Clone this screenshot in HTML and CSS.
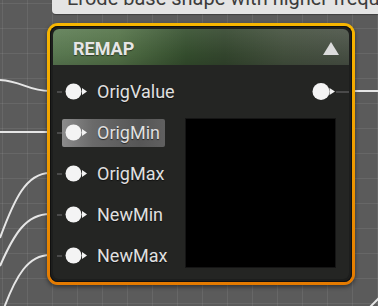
FILE: index.html
```html
<!DOCTYPE html>
<html lang="en">
<head>
    <meta charset="UTF-8">
    <meta name="viewport" content="width=device-width, initial-scale=1.0">
    <title>Remap Node</title>
    <link rel="stylesheet" href="styles.css">
</head>
<body>
    <div class="graph">
        <!-- wires live on the canvas, behind the node -->
        <svg class="wires" width="378" height="306" viewBox="0 0 378 306">
            <path d="M0,80 C22,81 28,91 50,91" />
            <path d="M0,132 L50,132" />
            <path d="M0,238 C14,200 26,173 50,173" />
            <path d="M0,266 C14,234 26,214 50,214" />
            <path d="M4,308 C16,276 28,255 50,255" />
            <path d="M352,91 L378,91" />
            <path d="M370,307 L379,298" />
        </svg>

        <div class="tooltip">Erode base shape with higher frequency noise</div>

        <div class="node">
            <div class="node-inner">
                <header class="node-header">
                    <span class="node-title">REMAP</span>
                    <span class="collapse-arrow"></span>
                </header>
                <div class="node-body">
                    <div class="inputs">
                        <div class="pin-row"><span class="pin-group"><svg class="pin" width="23" height="17" viewBox="0 0 23 17"><circle cx="8.5" cy="8.5" r="8"/><polygon points="17,5 22,8.5 17,12"/></svg><span class="pin-label">OrigValue</span></span></div>
                        <div class="pin-row"><span class="pin-group hovered"><svg class="pin" width="23" height="17" viewBox="0 0 23 17"><circle cx="8.5" cy="8.5" r="8"/><polygon points="17,5 22,8.5 17,12"/></svg><span class="pin-label">OrigMin</span></span></div>
                        <div class="pin-row"><span class="pin-group"><svg class="pin" width="23" height="17" viewBox="0 0 23 17"><circle cx="8.5" cy="8.5" r="8"/><polygon points="17,5 22,8.5 17,12"/></svg><span class="pin-label">OrigMax</span></span></div>
                        <div class="pin-row"><span class="pin-group"><svg class="pin" width="23" height="17" viewBox="0 0 23 17"><circle cx="8.5" cy="8.5" r="8"/><polygon points="17,5 22,8.5 17,12"/></svg><span class="pin-label">NewMin</span></span></div>
                        <div class="pin-row"><span class="pin-group"><svg class="pin" width="23" height="17" viewBox="0 0 23 17"><circle cx="8.5" cy="8.5" r="8"/><polygon points="17,5 22,8.5 17,12"/></svg><span class="pin-label">NewMax</span></span></div>
                    </div>
                    <div class="outputs">
                        <div class="out-row"><svg class="pin" width="24" height="17" viewBox="0 0 24 17"><circle cx="9" cy="8.5" r="8.5"/><polygon points="17.5,5 23,8.5 17.5,12"/></svg><span class="stub"></span></div>
                        <div class="preview"></div>
                    </div>
                </div>
            </div>
        </div>
    </div>
</body>
</html>
```

FILE: styles.css
```css
body {
    margin: 0;
    font-family: Roboto, "Liberation Sans", Arial, sans-serif;
    background-color: #5b5b5b;
}
.graph {
    position: relative;
    width: 378px;
    height: 306px;
    overflow: hidden;
    background-color: #5b5b5b;
    background-image:
        linear-gradient(to right, rgba(255, 255, 255, 0.07) 1px, transparent 1px),
        linear-gradient(to bottom, rgba(255, 255, 255, 0.07) 1px, transparent 1px);
    background-size: 25px 25px;
    background-position: 2px 3px;
}
.wires {
    position: absolute;
    left: 0;
    top: 0;
}
.wires path {
    fill: none;
    stroke: #e6e6e6;
    stroke-width: 2;
}

/* tooltip hanging above the node, mostly cut off */
.tooltip {
    position: absolute;
    left: 52px;
    top: -20px;
    width: 340px;
    height: 34px;
    box-sizing: border-box;
    padding: 8px 0 0 15px;
    background-color: #e4e4e4;
    border-radius: 4px;
    box-shadow: 0 1px 1px rgba(0, 0, 0, 0.3);
    font-size: 20px;
    line-height: 20px;
    color: #3c3c3c;
    white-space: nowrap;
    overflow: hidden;
}
.tooltip::after {
    content: "";
    position: absolute;
    left: 13px;
    bottom: -5px;
    border-left: 5px solid transparent;
    border-right: 5px solid transparent;
    border-top: 5px solid #e4e4e4;
}

/* node */
.node {
    position: absolute;
    left: 47px;
    top: 23px;
    width: 308px;
    height: 262px;
    box-sizing: border-box;
    padding: 3px;
    border-radius: 11px;
    background: linear-gradient(to bottom, #f7b600, #f0a000 45%, #e47a00);
    box-shadow: 0 2px 4px rgba(0, 0, 0, 0.45);
}
.node-inner {
    height: 100%;
    box-sizing: border-box;
    padding: 3px;
    border-radius: 8px;
    background-color: #1d1e1d;
    box-shadow: inset 0 0 0 1px #101010;
    display: flex;
    flex-direction: column;
}
.node-header {
    height: 36px;
    flex-shrink: 0;
    display: flex;
    align-items: center;
    justify-content: space-between;
    padding: 0 10px 0 20px;
    border-radius: 6px 6px 0 0;
    background:
        linear-gradient(to bottom, rgba(255, 255, 255, 0.08), rgba(0, 0, 0, 0.05) 70%, rgba(0, 0, 0, 0.15)),
        linear-gradient(to right, #5e7e55 0%, #557449 22%, #36502f 45%, #35482f 58%, #45523f 78%, #4b5347 100%);
}
.node-title {
    font-size: 18px;
    font-weight: 700;
    color: #e6e6e6;
    text-shadow: 0 1px 1px rgba(0, 0, 0, 0.5);
    padding-top: 2px;
}
.collapse-arrow {
    width: 0;
    height: 0;
    border-left: 8.5px solid transparent;
    border-right: 8.5px solid transparent;
    border-bottom: 13px solid #dcdcdc;
    margin-top: 2px;
}
.node-body {
    flex: 1;
    display: flex;
    background-color: #242523;
    border-radius: 0 0 6px 6px;
    padding-top: 6px;
}
.inputs {
    width: 135px;
}
.pin-row {
    height: 41px;
    display: flex;
    align-items: center;
    padding-left: 4px;
}
.pin-row::before {
    content: "";
    width: 5px;
    height: 2px;
    background-color: #4a4a4a;
}
.pin-group {
    display: flex;
    align-items: center;
    height: 28px;
    padding: 0 5px 0 3px;
    border-radius: 2px;
}
.pin-group.hovered {
    background: linear-gradient(to right, #8c8c8c, #6a6a6a 30%, #565656 75%, #606060);
}
.pin circle,
.pin polygon {
    fill: #f4f4f4;
}
.pin-label {
    margin-left: 9px;
    font-size: 18px;
    color: #e0e0e0;
    text-shadow: 0 1px 1px rgba(0, 0, 0, 0.6);
    white-space: nowrap;
}
.outputs {
    flex: 1;
    display: flex;
    flex-direction: column;
    align-items: flex-end;
}
.out-row {
    height: 41px;
    display: flex;
    align-items: center;
}
.stub {
    width: 13px;
    height: 2px;
    background-color: #4a4a4a;
}
.preview {
    width: 151px;
    height: 150px;
    margin-top: 6px;
    margin-right: 13px;
    box-sizing: border-box;
    background-color: #000;
    border: 1px solid #151515;
}
```
